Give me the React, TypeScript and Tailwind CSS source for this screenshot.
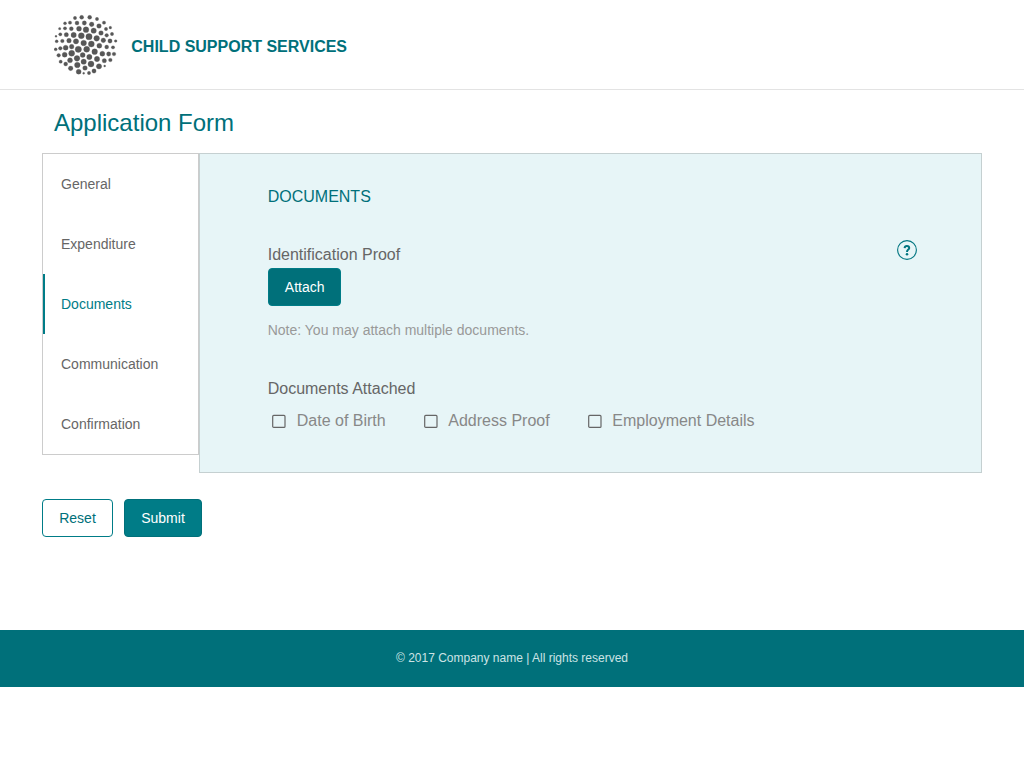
const dots: [number, number, number][] = [
  [225, 24, 5], [245, 22, 6], [269, 22, 6], [291, 27, 5],
  [195, 40, 4.5], [210, 38, 5], [231, 39, 6], [253, 39, 6.5], [275, 43, 7], [297, 48, 7], [312, 38, 5],
  [179, 56, 3.5], [195, 55, 5], [214, 56, 6], [237, 56, 7.5], [258, 59, 8.5], [281, 62, 8], [303, 69, 7], [318, 57, 5], [331, 53, 4],
  [168, 79, 3], [181, 73, 5], [199, 74, 6.5], [221, 75, 8], [244, 77, 9], [267, 80, 9.5], [290, 85, 8.5], [320, 76, 5.5], [336, 72, 5],
  [170, 94, 4.5], [187, 93, 5.5], [207, 92, 7], [228, 94, 8], [251, 99, 8.5], [274, 102, 9], [310, 91, 7], [330, 93, 6.5], [347, 93, 4],
  [167, 118, 4.5], [181, 115, 5.5], [197, 113, 7.5], [215, 110, 7], [235, 118, 9.5], [260, 118, 9], [298, 107, 7.5], [320, 111, 6], [339, 112, 5],
  [176, 136, 5.5], [194, 134, 7.5], [215, 130, 9], [248, 135, 7.5], [284, 125, 8.5], [307, 131, 7.5], [326, 132, 6.5], [342, 132, 5.5],
  [182, 155, 5], [210, 151, 7.5], [231, 145, 8.5], [251, 155, 8], [268, 141, 8], [291, 147, 8], [313, 152, 6.5], [331, 150, 5.5],
  [197, 162, 6], [232, 165, 8.5], [273, 162, 9], [297, 169, 8], [314, 168, 3],
  [212, 175, 7], [255, 174, 7], [236, 185, 7.5], [251, 190, 3], [267, 189, 5], [282, 183, 6.5],
];

const steps = ["General", "Expenditure", "Documents", "Communication", "Confirmation"];

function Logo() {
  return (
    <svg className="h-[62px] w-16 shrink-0" viewBox="162 12 192 186" fill="#575757" stroke="#575757" strokeWidth="0.8" aria-hidden="true">
      {dots.map(([x, y, r]) => (
        <circle key={`${x}-${y}`} cx={x} cy={y} r={r} />
      ))}
    </svg>
  );
}

function Option({ label, className }: { label: string; className: string }) {
  return (
    <label className={`flex items-center ${className}`}>
      <svg className="mr-[10.6px] size-3.5 shrink-0" viewBox="0 0 14 14" fill="none" stroke="#666" strokeWidth="1.2" aria-hidden="true">
        <rect x="0.7" y="1.4" width="12.3" height="12" rx="1" />
      </svg>
      {label}
    </label>
  );
}

export default function App() {
  return (
    <div className="min-h-screen bg-white font-['Liberation_Sans',Arial,sans-serif] text-[#666]">
      <header className="flex h-[90px] items-start border-b border-[#e3e3e3] pt-3.5 pl-[54px]">
        <Logo />
        <div className="mt-[21px] ml-[13.3px] text-base leading-6 font-bold text-[#00707a]">CHILD SUPPORT SERVICES</div>
      </header>

      <main className="h-[540px] px-[42px] pt-[15px]">
        <h1 className="pl-3 text-2xl leading-9 text-[#00707a]">Application Form</h1>

        <div className="mt-3 flex items-start">
          <nav className="w-[157px] border border-[#ccc] text-sm">
            {steps.map((step) => (
              <a
                key={step}
                className={
                  step === "Documents"
                    ? "flex h-[60px] items-center border-l-2 border-[#007c87] pl-4 text-[#007c87]"
                    : "flex h-[60px] items-center border-l-2 border-transparent pl-4"
                }
              >
                {step}
              </a>
            ))}
          </nav>

          <section className="h-80 w-[783px] border border-[#c5d0d1] bg-[#e7f5f7] pt-[31px] pr-16 pl-[67.7px]">
            <h2 className="text-base leading-6 text-[#00707a]">DOCUMENTS</h2>
            <div className="mt-[31px] flex justify-between">
              <div className="pt-[3px] text-base leading-6">Identification Proof</div>
              <svg className="size-5" viewBox="0 0 20 20" fill="none" stroke="#007580" aria-label="Help">
                <circle cx="10" cy="10" r="9.4" strokeWidth="1.1" />
                <path d="M7.6 8.1C7.7 6.7 8.6 6 9.9 6c1.4 0 2.3.8 2.3 2 0 1.7-2.2 1.6-2.2 4" strokeWidth="2" />
                <circle cx="10" cy="14.3" r="1.25" fill="#007580" stroke="none" />
              </svg>
            </div>
            <button className="mt-px flex h-[38px] w-[73px] items-center justify-center rounded border border-[#007c87] bg-[#00707a] pl-px text-sm text-white">
              Attach
            </button>
            <p className="mt-3.5 text-sm leading-5 text-[#999]">Note: You may attach multiple documents.</p>
            <div className="mt-[37px] text-base leading-6">Documents Attached</div>
            <div className="mt-2 flex pl-[4.5px] text-base leading-6 text-[#888]">
              <Option label="Date of Birth" className="w-[151.5px]" />
              <Option label="Address Proof" className="w-[164px]" />
              <Option label="Employment Details" className="" />
            </div>
          </section>
        </div>

        <div className="mt-[26px] flex gap-[11px] text-sm">
          <button className="h-[38px] w-[71px] rounded border border-[#007c87] bg-white text-[#00707a]">Reset</button>
          <button className="h-[38px] w-[78px] rounded border border-[#00707a] bg-[#007c87] text-white">Submit</button>
        </div>
      </main>

      <footer className="flex h-[57px] items-center justify-center bg-[#00707a] pb-0.5 text-xs text-[#cce3e5]">
        © 2017 Company name | All rights reserved
      </footer>
    </div>
  );
}
